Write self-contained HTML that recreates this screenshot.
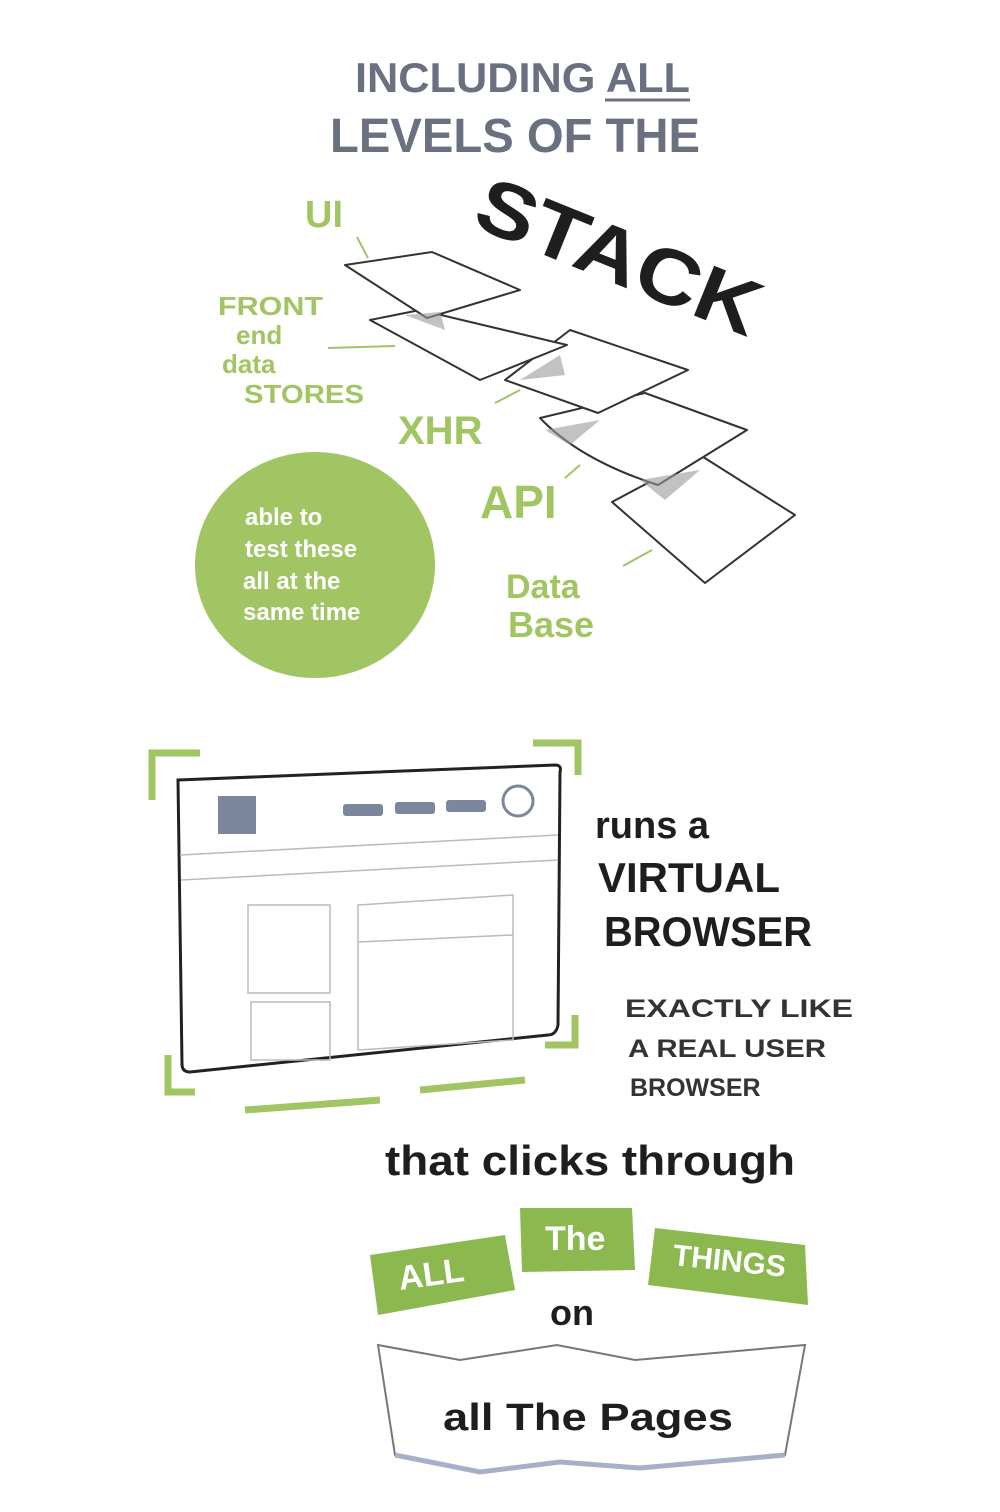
<!DOCTYPE html>
<html><head><meta charset="utf-8"><style>
html,body{margin:0;padding:0;background:#fff}
svg{display:block}
text{font-family:"Liberation Sans",sans-serif;font-weight:bold}
</style></head><body>
<svg width="1000" height="1512" viewBox="0 0 1000 1512">
<g fill="#6b7080" font-size="42">
<text x="355" y="92" textLength="335" lengthAdjust="spacingAndGlyphs">INCLUDING ALL</text>
<line x1="605" y1="100" x2="690" y2="100" stroke="#6b7080" stroke-width="3"/>
<text x="330" y="152" font-size="48" textLength="370" lengthAdjust="spacingAndGlyphs">LEVELS OF THE</text>
</g>
<text x="470" y="225" font-size="78" fill="#1e1e1e" transform="rotate(22 470 225)" textLength="300" lengthAdjust="spacingAndGlyphs">STACK</text>
<g fill="#a0c562">
<text x="305" y="227" font-size="38">UI</text>
<text x="218" y="315" font-size="26" textLength="105" lengthAdjust="spacingAndGlyphs">FRONT</text>
<text x="236" y="344" font-size="26">end</text>
<text x="222" y="373" font-size="26">data</text>
<text x="244" y="403" font-size="26" textLength="120" lengthAdjust="spacingAndGlyphs">STORES</text>
<text x="398" y="444" font-size="40">XHR</text>
<text x="480" y="518" font-size="46">API</text>
<text x="506" y="598" font-size="34">Data</text>
<text x="508" y="637" font-size="36">Base</text>
<ellipse cx="315" cy="565" rx="120" ry="113"/>
</g>
<g stroke="#a0c562" stroke-width="2"><line x1="357" y1="237" x2="368" y2="258"/><line x1="328" y1="348" x2="395" y2="346"/><line x1="495" y1="403" x2="520" y2="390"/><line x1="565" y1="478" x2="580" y2="465"/><line x1="623" y1="566" x2="652" y2="550"/></g>
<g fill="#fff" font-size="24"><text x="245" y="525">able to</text><text x="245" y="557">test these</text><text x="243" y="589">all at the</text><text x="243" y="620">same time</text></g>
<g fill="#fff" stroke="#333" stroke-width="2" stroke-linejoin="round">
<path d="M612 502 L700 455 L795 515 L705 583 Z"/>
<path d="M540 418 L645 393 L747 430 L658 485 Q580 460 540 418 Z"/>
<path d="M505 380 L570 330 L688 370 L598 413 Z"/>
<path d="M370 320 L420 310 L567 345 L480 380 Z"/>
<path d="M345 265 L432 252 L520 290 L427 318 Z"/>
</g>
<g fill="#999" opacity=".6"><path d="M405 315 L440 312 L445 330 Z"/><path d="M520 380 L560 355 L565 375 Z"/><path d="M545 430 L600 420 L570 445Z"/><path d="M640 480 L700 470 L665 500 Z"/></g>
<!-- browser -->
<g fill="none" stroke="#a0c562" stroke-width="7">
<path d="M152 800 L152 753 L200 753"/><path d="M533 743 L578 743 L578 775"/><path d="M168 1055 L168 1092 L195 1092"/><path d="M575 1015 L575 1045 L545 1045"/>
<path d="M245 1110 L380 1100 M420 1090 L525 1080"/>
</g>
<path d="M178 780 L555 765 Q562 765 560 772 L558 1025 Q556 1035 548 1035 L190 1072 Q182 1072 182 1064 Z" fill="#fff" stroke="#222" stroke-width="3"/>
<g stroke="#bbb" stroke-width="1.5" fill="none"><line x1="180" y1="855" x2="558" y2="835"/><line x1="181" y1="880" x2="558" y2="860"/><rect x="248" y="905" width="82" height="88"/><rect x="251" y="1002" width="79" height="58"/><path d="M358 905 L513 895 L513 1040 L358 1050 Z"/><line x1="358" y1="942" x2="513" y2="935"/></g>
<rect x="218" y="796" width="38" height="38" fill="#7c869c"/>
<g fill="#7c869c"><rect x="343" y="804" width="40" height="12" rx="3"/><rect x="395" y="802" width="40" height="12" rx="3"/><rect x="446" y="800" width="40" height="12" rx="3"/></g>
<circle cx="518" cy="801" r="15" fill="none" stroke="#7c869c" stroke-width="3"/>
<g fill="#1e1e1e"><text x="595" y="838" font-size="38">runs a</text><text x="598" y="892" font-size="42">VIRTUAL</text><text x="604" y="946" font-size="42" textLength="208" lengthAdjust="spacingAndGlyphs">BROWSER</text></g>
<g fill="#333" font-size="25" font-weight="normal"><text x="625" y="1017" textLength="228" lengthAdjust="spacingAndGlyphs">EXACTLY LIKE</text><text x="628" y="1057" textLength="198" lengthAdjust="spacingAndGlyphs">A REAL USER</text><text x="630" y="1096">BROWSER</text></g>
<text x="385" y="1175" font-size="42" fill="#1e1e1e" textLength="410" lengthAdjust="spacingAndGlyphs">that clicks through</text>
<g fill="#8bb94f"><path d="M370 1255 L505 1235 L515 1290 L378 1315 Z"/><path d="M520 1208 L632 1208 L635 1270 L522 1272 Z"/><path d="M655 1228 L805 1245 L808 1305 L648 1285 Z"/></g>
<g fill="#fff" font-size="34"><text x="400" y="1290" transform="rotate(-8 400 1290)">ALL</text><text x="545" y="1250">The</text><text x="672" y="1265" transform="rotate(6 672 1265)" font-size="30">THINGS</text></g>
<text x="550" y="1325" font-size="36" fill="#1e1e1e">on</text>
<path d="M378 1345 L460 1360 L557 1345 L635 1360 L805 1345 L785 1455 L720 1460 L640 1468 L560 1462 L480 1472 L395 1455 Z" fill="#fff" stroke="#777" stroke-width="2"/>
<path d="M395 1455 L480 1472 L560 1462 L640 1468 L785 1455" fill="none" stroke="#a8b0c8" stroke-width="5"/>
<text x="443" y="1430" font-size="38" fill="#1e1e1e" textLength="290" lengthAdjust="spacingAndGlyphs">all The Pages</text>
</svg>
</body></html>
